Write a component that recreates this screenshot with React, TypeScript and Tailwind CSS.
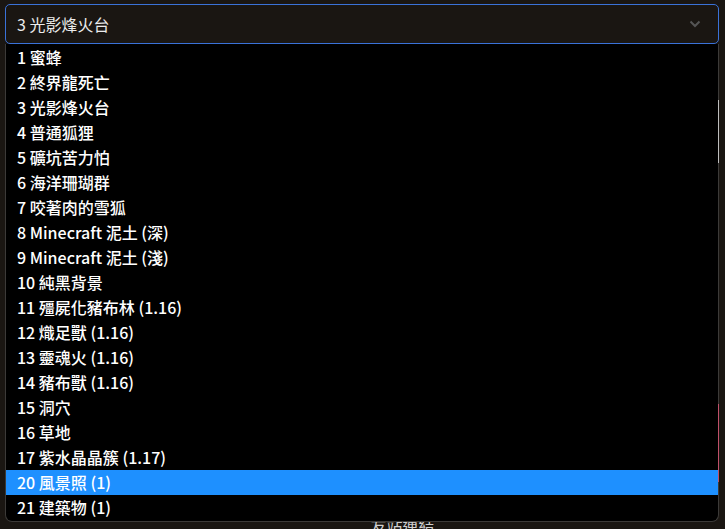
import React from "react";

const options = [
  "1 蜜蜂",
  "2 終界龍死亡",
  "3 光影烽火台",
  "4 普通狐狸",
  "5 礦坑苦力怕",
  "6 海洋珊瑚群",
  "7 咬著肉的雪狐",
  "8 Minecraft 泥土 (深)",
  "9 Minecraft 泥土 (淺)",
  "10 純黑背景",
  "11 殭屍化豬布林 (1.16)",
  "12 熾足獸 (1.16)",
  "13 靈魂火 (1.16)",
  "14 豬布獸 (1.16)",
  "15 洞穴",
  "16 草地",
  "17 紫水晶晶簇 (1.17)",
  "20 風景照 (1)",
  "21 建築物 (1)",
];

const App: React.FC = () => {
  const selected = "20 風景照 (1)";
  return (
    <div
      className="relative w-[725px] h-[529px] overflow-hidden bg-[#1a1612] text-[#e6e6e6]"
      style={{ fontFamily: '"Noto Sans CJK TC", "Noto Sans", sans-serif' }}
    >
      <div className="pt-[4px] pl-[5px]">
        <div className="flex items-center justify-between w-[714px] h-[40px] border border-[#3a72d8] rounded-[5px] bg-[#1a1612] pl-[11px] pr-[17px]">
          <span className="text-[16px] text-[#ececec]">3 光影烽火台</span>
          <svg width="12" height="8" viewBox="0 0 12 8" fill="none">
            <path d="M1.5 1.5 L6 6 L10.5 1.5" stroke="#555555" strokeWidth="2" />
          </svg>
        </div>
      </div>

      <div className="mt-[471px] flex justify-center pl-[80px]">
        <span className="text-[16px] text-[#cfcfcf] leading-[20px]">友站連結</span>
      </div>

      {/* open options list */}
      <div className="absolute left-[5px] top-[44px] w-[714px] h-[478px] bg-black border border-t-0 border-[#3c3a38] rounded-b-[7px] pt-[1px]">
        {options.map((o) => (
          <div
            key={o}
            className={
              "h-[25px] leading-[25px] pl-[11px] text-[16px] font-medium text-white " +
              (o === selected ? "bg-[#1e90ff]" : "")
            }
          >
            {o}
          </div>
        ))}
        <div className="absolute right-[-1px] top-[56px] w-[1px] h-[63px] bg-[#bdbdbd]" />
        <div className="absolute right-[-1px] top-[360px] w-[1px] h-[78px] bg-[#c0506a]" />
      </div>
    </div>
  );
};

export default App;
